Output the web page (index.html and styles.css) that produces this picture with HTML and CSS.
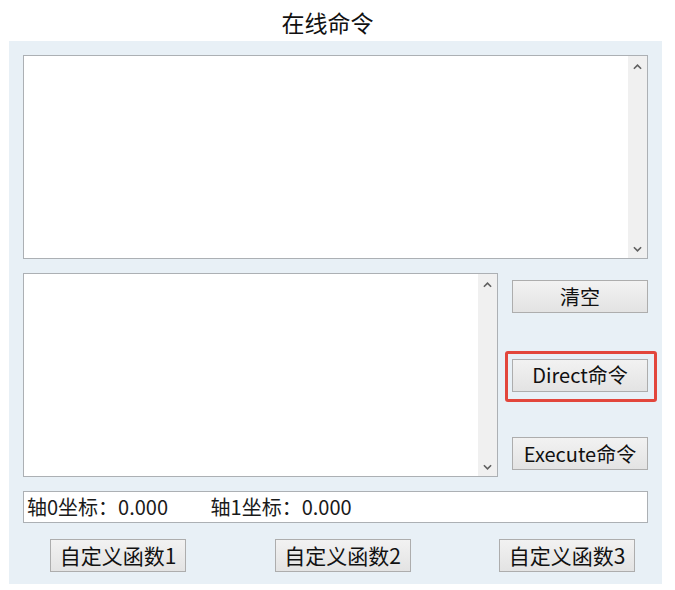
FILE: index.html
```html
<!DOCTYPE html>
<html lang="zh-CN">
<head>
    <meta charset="UTF-8">
    <title>在线命令</title>
    <link rel="stylesheet" href="styles.css">
</head>
<body>
    <h1 class="title">在线命令</h1>

    <div class="panel">
        <div class="text-box output-box">
            <div class="text-area"></div>
            <div class="scrollbar">
                <svg class="arrow" viewBox="0 0 10 6"><path d="M1 5 L5 1 L9 5" /></svg>
                <svg class="arrow" viewBox="0 0 10 6"><path d="M1 1 L5 5 L9 1" /></svg>
            </div>
        </div>

        <div class="middle-row">
            <div class="text-box input-box">
                <div class="text-area"></div>
                <div class="scrollbar">
                    <svg class="arrow" viewBox="0 0 10 6"><path d="M1 5 L5 1 L9 5" /></svg>
                    <svg class="arrow" viewBox="0 0 10 6"><path d="M1 1 L5 5 L9 1" /></svg>
                </div>
            </div>
            <div class="side-buttons">
                <button class="btn">清空</button>
                <button class="btn btn-marked">Direct命令</button>
                <button class="btn">Execute命令</button>
            </div>
        </div>

        <div class="status-field">
            <span>轴0坐标：0.000</span>
            <span class="axis-second">轴1坐标：0.000</span>
        </div>

        <div class="func-buttons">
            <button class="btn">自定义函数1</button>
            <button class="btn">自定义函数2</button>
            <button class="btn">自定义函数3</button>
        </div>
    </div>
</body>
</html>
```

FILE: styles.css
```css
* {
    margin: 0;
    padding: 0;
    box-sizing: border-box;
}

body {
    font-family: "Noto Sans CJK SC", "Noto Sans", sans-serif;
    background: #ffffff;
    color: #1a1a1a;
    width: 675px;
}

.title {
    height: 41px;
    line-height: 44px;
    font-size: 23px;
    font-weight: 400;
    text-align: center;
    padding-right: 20px;
    color: #111;
}

.panel {
    margin-left: 9px;
    width: 653px;
    height: 543px;
    background: #e8f0f6;
    padding: 14px 0 0 14px;
}

.text-box {
    display: flex;
    background: #ffffff;
    border: 1px solid #acb0b4;
}

.output-box {
    width: 625px;
    height: 204px;
}

.text-area {
    flex: 1;
}

.scrollbar {
    width: 19px;
    background: #f0f0f0;
    display: flex;
    flex-direction: column;
    justify-content: space-between;
    align-items: center;
    padding: 8px 0 6px;
}

.arrow {
    width: 9px;
    height: 6px;
    fill: none;
    stroke: #606060;
    stroke-width: 1.8;
}

.middle-row {
    display: flex;
    gap: 14px;
    margin-top: 14px;
    height: 204px;
}

.input-box {
    width: 475px;
    height: 204px;
}

.side-buttons {
    display: flex;
    flex-direction: column;
    justify-content: space-between;
    padding: 7px 0;
}

.btn {
    font-family: "Noto Sans CJK SC", "Noto Sans", sans-serif;
    font-size: 20px;
    color: #111;
    height: 33px;
    width: 136px;
    border: 1px solid #adadad;
    background: linear-gradient(#f2f2f2, #e3e3e3);
    line-height: 1;
    padding: 0;
    cursor: pointer;
}

.btn-marked {
    position: relative;
}

.btn-marked::after {
    content: "";
    position: absolute;
    left: -8px;
    right: -10px;
    top: -9px;
    bottom: -11px;
    border: 3px solid #e2463c;
    border-radius: 3px;
}

.status-field {
    margin-top: 14px;
    width: 625px;
    height: 32px;
    background: #ffffff;
    border: 1px solid #acb0b4;
    font-size: 20px;
    line-height: 29px;
    padding-left: 3px;
    white-space: nowrap;
}

.axis-second {
    margin-left: 38px;
}

.func-buttons {
    display: flex;
    justify-content: space-between;
    width: 625px;
    padding: 0 13px 0 27px;
    margin-top: 16px;
}

.func-buttons .btn {
    width: 136px;
    font-size: 21px;
}
```
